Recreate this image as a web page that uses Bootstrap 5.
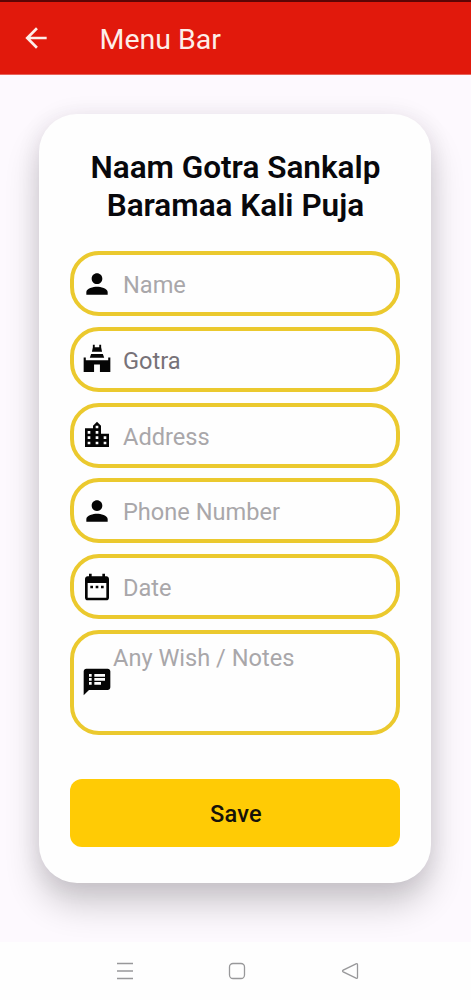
<!DOCTYPE html>
<html lang="en">
<head>
<meta charset="utf-8">
<meta name="viewport" content="width=device-width, initial-scale=1">
<title>Naam Gotra Sankalp</title>
<link href="https://cdn.jsdelivr.net/npm/bootstrap@5.3.0/dist/css/bootstrap.min.css" rel="stylesheet">
<style>
body{font-family:Roboto,"Liberation Sans",sans-serif;background:#fdf9fe;height:1000px;overflow:hidden}
.app-bar{height:75px;background:#e1190c;border-top:2px solid #5c0505;border-bottom:1px solid #e8635b;color:#fdeee9;padding:0 0 0 20px}
.app-bar svg{width:32px;height:32px;margin-right:47.5px}
.app-title{font-size:28.5px;line-height:34px;letter-spacing:0;margin-top:3px}
.page-area{height:867px;padding:39px 39.6px 0 39.4px}
.puja-card{height:769px;border:0;border-radius:38px;padding:35px 31px 0;background:#fefefe;box-shadow:0 22px 34px rgba(0,0,0,.19),0 2px 24px rgba(40,20,50,.09)}
.puja-title{font-size:31.5px;line-height:37.5px;font-weight:600;color:#08080c;margin:0 0 27px;white-space:nowrap}
.fields{gap:10.8px}
.field{height:65px;border:4px solid #ebc92e;border-radius:29px;padding-left:6.6px;color:#a9a7aa;font-size:23.6px;line-height:28px}
.field svg{width:32px;height:32px;fill:#050505;flex:none}
.field span{margin-left:10px;padding-top:3px;white-space:nowrap}
.field .chosen{color:#777278}
.field-notes{height:105px}
.field-notes span{margin-left:0;align-self:flex-start;padding-top:10.5px}
.save-btn,.save-btn:hover{height:68px;border:0;border-radius:12px;background:#ffcb05;color:#16120a;font-size:23.6px;font-weight:500;margin-top:44.4px;letter-spacing:.2px;padding:2px 0 0 1px}
.sys-nav{height:58px;background:#fefefe;padding:0 0 1px 3px}
.sys-nav svg{width:18px;height:18px;fill:none;stroke:#98989a;stroke-width:1.3;overflow:visible}
.sys-nav .home-key{margin:0 94.5px}
</style>
</head>
<body>
<header class="app-bar d-flex align-items-center">
  <svg viewBox="0 0 24 24" fill="#fdeee9"><path d="M20 11H7.83l5.59-5.59L12 4l-8 8 8 8 1.41-1.41L7.83 13H20v-2z"/></svg>
  <div class="app-title">Menu Bar</div>
</header>
<main class="page-area">
  <form class="card puja-card">
    <h1 class="puja-title text-center">Naam Gotra Sankalp<br>Baramaa Kali Puja</h1>
    <div class="fields d-flex flex-column">
      <div class="field d-flex align-items-center">
        <svg viewBox="0 0 24 24"><path d="M12 12c2.21 0 4-1.79 4-4s-1.79-4-4-4-4 1.79-4 4 1.79 4 4 4zm0 2c-2.67 0-8 1.34-8 4v2h16v-2c0-2.66-5.33-4-8-4z"/></svg>
        <span>Name</span>
      </div>
      <div class="field d-flex align-items-center">
        <svg viewBox="0 0 24 24"><path d="M8.9 1.3h1.4v1.8h3.4v-1.8h1.4v1.8l.7 3.4H8.2l.7-3.4zM7.6 8.2h8.8l1 2.8H6.6zM2 10.9h1.6v2.1H20.4v-2.1H22v10.9h-7.8V16.2h-4.4v5.6H2z"/></svg>
        <span class="chosen">Gotra</span>
      </div>
      <div class="field d-flex align-items-center">
        <svg viewBox="0 0 24 24"><path d="M15 11V5l-3-3-3 3v2H3v14h18V11h-6zm-8 8H5v-2h2v2zm0-4H5v-2h2v2zm0-4H5V9h2v2zm6 8h-2v-2h2v2zm0-4h-2v-2h2v2zm0-4h-2V9h2v2zm0-4h-2V5h2v2zm6 12h-2v-2h2v2zm0-4h-2v-2h2v2z"/></svg>
        <span>Address</span>
      </div>
      <div class="field d-flex align-items-center">
        <svg viewBox="0 0 24 24"><path d="M12 12c2.21 0 4-1.79 4-4s-1.79-4-4-4-4 1.79-4 4 1.79 4 4 4zm0 2c-2.67 0-8 1.34-8 4v2h16v-2c0-2.66-5.33-4-8-4z"/></svg>
        <span>Phone Number</span>
      </div>
      <div class="field d-flex align-items-center">
        <svg viewBox="0 0 24 24"><path d="M9 11H7v2h2v-2zm4 0h-2v2h2v-2zm4 0h-2v2h2v-2zm2-7h-1V2h-2v2H8V2H6v2H5c-1.11 0-1.99.9-1.99 2L3 20c0 1.1.89 2 2 2h14c1.1 0 2-.9 2-2V6c0-1.1-.9-2-2-2zm0 16H5V9h14v11z"/></svg>
        <span>Date</span>
      </div>
      <div class="field field-notes d-flex align-items-center">
        <svg viewBox="0 0 24 24"><path d="M20 2H4c-1.1 0-1.99.9-1.99 2L2 22l4-4h14c1.1 0 2-.9 2-2V4c0-1.1-.9-2-2-2zM8 14H6v-2h2v2zm0-3H6V9h2v2zm0-3H6V6h2v2zm7 6h-5v-2h5v2zm3-3h-8V9h8v2zm0-3h-8V6h8v2z"/></svg>
        <span>Any Wish / Notes</span>
      </div>
    </div>
    <button type="button" class="btn save-btn w-100">Save</button>
  </form>
</main>
<nav class="sys-nav d-flex justify-content-center align-items-center">
  <svg viewBox="0 0 18 18"><path d="M1 1.5h16M1 9h16M1 16.5h16"/></svg>
  <svg class="home-key" viewBox="0 0 18 18"><rect x="1.5" y="1.5" width="15" height="15" rx="3.5"/></svg>
  <svg viewBox="0 0 18 18"><path d="M15 1.8 2.2 8.1q-1.3.9 0 1.8L15 16.200q1.500.5 1.500-1V2.800q0-1.500-1.500-1z"/></svg>
</nav>
<script src="https://cdn.jsdelivr.net/npm/bootstrap@5.3.0/dist/js/bootstrap.bundle.min.js"></script>
</body>
</html>
